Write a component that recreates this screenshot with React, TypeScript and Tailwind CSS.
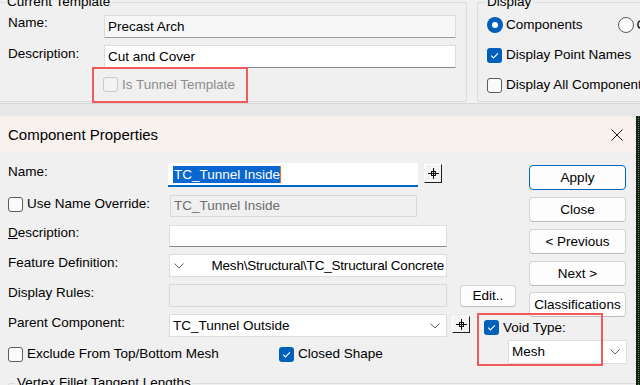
import React from "react";

function Box({ checked = false, disabled = false, cls = "" }: { checked?: boolean; disabled?: boolean; cls?: string }) {
  if (checked) {
    return (
      <div className={"w-[15px] h-[15px] shrink-0 rounded-[3px] bg-[#005fb8] flex items-center justify-center " + cls}>
        <svg width="11" height="11" viewBox="0 0 11 11">
          <polyline points="2.2,5.7 4.4,7.9 8.9,3.3" fill="none" stroke="#ffffff" strokeWidth="1.1" />
        </svg>
      </div>
    );
  }
  return (
    <div
      className={
        (disabled
          ? "w-[15px] h-[15px] shrink-0 rounded-[3px] border border-[#c9c9c9] bg-[#f3f3f3] "
          : "w-[15px] h-[15px] shrink-0 rounded-[3px] border border-[#5c5c5c] bg-[#fbfbfb] ") + cls
      }
    />
  );
}

function Radio({ on = false }: { on?: boolean }) {
  if (on) {
    return (
      <div className="w-[16px] h-[16px] shrink-0 rounded-full bg-[#005fb8] flex items-center justify-center">
        <div className="w-[6px] h-[6px] rounded-full bg-white" />
      </div>
    );
  }
  return <div className="w-[16px] h-[16px] shrink-0 rounded-full border border-[#5c5c5c] bg-[#fbfbfb]" />;
}

function Chevron() {
  return (
    <svg width="10" height="6" viewBox="0 0 10 6" className="shrink-0">
      <polyline points="0.5,0.5 5,5 9.5,0.5" fill="none" stroke="#5f5f5f" strokeWidth="1" />
    </svg>
  );
}

function Pin({ cls }: { cls: string }) {
  return (
    <div
      className={
        "w-[18px] shrink-0 bg-[#f4f4f4] border border-t-[#ffffff] border-l-[#ffffff] border-r-[#1e1e1e] border-b-[#1e1e1e] flex items-center justify-center " +
        cls
      }
    >
      <svg width="11" height="11" viewBox="0 0 11 11">
        <line x1="0" y1="5.5" x2="11" y2="5.5" stroke="#111" strokeWidth="1" />
        <line x1="5.5" y1="0" x2="5.5" y2="11" stroke="#111" strokeWidth="1" />
        <rect x="3.5" y="3.5" width="4" height="4" fill="none" stroke="#111" strokeWidth="1" />
      </svg>
    </div>
  );
}

function Btn({ children, primary = false, cls = "" }: { children: React.ReactNode; primary?: boolean; cls?: string }) {
  return (
    <div
      className={
        (primary
          ? "w-[97px] h-[25px] shrink-0 rounded-[4px] bg-[#fdfdfd] border border-[#0067c0] flex items-center justify-center whitespace-nowrap "
          : "w-[97px] h-[25px] shrink-0 rounded-[4px] bg-[#fdfdfd] border border-[#d3d3d3] border-b-[#bcbcbc] flex items-center justify-center whitespace-nowrap ") +
        cls
      }
    >
      {children}
    </div>
  );
}

export default function App() {
  return (
    <div className="relative w-[640px] h-[385px] overflow-hidden bg-[#f0f0f0] text-[13.5px] leading-[18px] text-black font-['Liberation_Sans',Arial,sans-serif]">
      {/* background window */}
      <div className="h-[104px] border-b border-[#d6d6d6] flex overflow-hidden">
        <fieldset className="ml-[-2px] mt-[-7px] w-[469px] h-[109px] shrink-0 border border-[#dcdcdc] rounded-[2px]">
          <legend className="ml-[6px] px-[2px] whitespace-nowrap">Current Template</legend>
          <div className="pl-[9px]">
            <div className="mt-[4px] flex items-start h-[23px]">
              <div className="w-[96px] shrink-0 mt-[-1px]">Name:</div>
              <div className="w-[352px] h-[23px] shrink-0 bg-[#f6f6f6] border border-[#dcdcdc] border-b-[#9b9b9b] flex items-center pl-[3px]">
                Precast Arch
              </div>
            </div>
            <div className="mt-[7px] flex items-start h-[23px]">
              <div className="w-[96px] shrink-0">Description:</div>
              <div className="w-[352px] h-[23px] shrink-0 bg-white border border-[#dcdcdc] border-b-[#8a8a8a] flex items-center pl-[3px]">
                Cut and Cover
              </div>
            </div>
            <div className="mt-[9px] flex items-center h-[15px]">
              <Box disabled cls="ml-[95px]" />
              <span className="ml-[4px] text-[#8d8d8d] whitespace-nowrap">Is Tunnel Template</span>
            </div>
          </div>
        </fieldset>
        <fieldset className="ml-[10px] mt-[-7px] w-[200px] h-[109px] shrink-0 border border-[#dcdcdc] rounded-[2px]">
          <legend className="ml-[7px] px-[2px] whitespace-nowrap">Display</legend>
          <div className="pl-[9px] whitespace-nowrap">
            <div className="mt-[6px] h-[16px] flex items-center">
              <Radio on />
              <span className="ml-[3px]">Components</span>
              <div className="ml-[35px]">
                <Radio />
              </div>
              <span className="ml-[3px]">Constraints</span>
            </div>
            <div className="mt-[14px] h-[16px] flex items-center">
              <Box checked />
              <span className="ml-[4px]">Display Point Names</span>
            </div>
            <div className="mt-[14px] h-[16px] flex items-center">
              <Box />
              <span className="ml-[4px]">Display All Components</span>
            </div>
          </div>
        </fieldset>
      </div>
      <div className="h-[12px] bg-[#e8e8e8]" />

      {/* dialog area */}
      <div className="flex h-[269px] bg-[#e8e8e8]">
        <div className="w-[636px] shrink-0 h-full flex flex-col rounded-tr-[8px] rounded-tl-[3px] overflow-hidden bg-[#f0f0f0]">
          <div className="h-[37px] shrink-0 bg-[#f9f1ee] flex items-center justify-between pl-[8px] pr-[13px]">
            <span className="text-[15px]">Component Properties</span>
            <svg width="12" height="12" viewBox="0 0 12 12">
              <line x1="0.5" y1="0.5" x2="11.5" y2="11.5" stroke="#1a1a1a" strokeWidth="1" />
              <line x1="11.5" y1="0.5" x2="0.5" y2="11.5" stroke="#1a1a1a" strokeWidth="1" />
            </svg>
          </div>

          <div className="flex-1 pt-[10px] pl-[8px] pr-[10px]">
            <div className="flex">
              <div className="w-[521px] shrink-0">
                {/* Name */}
                <div className="flex items-start h-[24px]">
                  <div className="w-[160px] shrink-0">Name:</div>
                  <div className="w-[250px] h-[24px] shrink-0 bg-white border-b-2 border-[#0067c0] flex items-center pl-[5px]">
                    <span className="bg-[#0b67d0] text-white leading-[17px] pl-[1px] whitespace-nowrap">TC_Tunnel Inside</span>
                    <span className="w-px h-[17px] bg-[#e8731c]" />
                  </div>
                  <Pin cls="ml-[6px] mt-[1px] h-[19px]" />
                </div>
                {/* Use name override */}
                <div className="mt-[8px] flex items-start h-[22px]">
                  <div className="w-[162px] shrink-0 flex items-start">
                    <Box cls="mt-[2px]" />
                    <span className="ml-[4px] whitespace-nowrap">Use Name Override:</span>
                  </div>
                  <div className="w-[247px] h-[22px] shrink-0 bg-[#f0f0f0] border border-[#d9d9d9] flex items-center pl-[3px] text-[#6d6d6d]">
                    TC_Tunnel Inside
                  </div>
                </div>
                {/* Description */}
                <div className="mt-[8px] flex items-start h-[22px]">
                  <div className="w-[161px] shrink-0 mt-[-1px]">
                    <span className="underline">D</span>escription:
                  </div>
                  <div className="w-[278px] h-[22px] shrink-0 bg-white border border-[#dedede] border-b-[#888888]" />
                </div>
                {/* Feature definition */}
                <div className="mt-[7px] flex items-start h-[23px]">
                  <div className="w-[161px] shrink-0">Feature Definition:</div>
                  <div className="w-[278px] h-[23px] shrink-0 bg-white border border-[#dedede] flex items-center pl-[4px] pr-[2px] overflow-hidden">
                    <Chevron />
                    <div className="flex-1 flex justify-end overflow-hidden">
                      <span className="whitespace-nowrap shrink-0 tracking-[-0.2px]">{"Mesh\\Structural\\TC_Structural Concrete"}</span>
                    </div>
                  </div>
                </div>
                {/* Display rules */}
                <div className="mt-[7px] flex items-start h-[23px]">
                  <div className="w-[161px] shrink-0">Display Rules:</div>
                  <div className="w-[278px] h-[23px] shrink-0 bg-[#f0f0f0] border border-[#d9d9d9]" />
                  <div className="ml-[13px] mt-[1px] w-[56px] h-[22px] shrink-0 rounded-[4px] bg-[#fdfdfd] border border-[#d3d3d3] border-b-[#bcbcbc] flex items-center justify-center">
                    Edit..
                  </div>
                </div>
                {/* Parent component */}
                <div className="mt-[7px] flex items-start h-[23px]">
                  <div className="w-[161px] shrink-0">Parent Component:</div>
                  <div className="w-[278px] h-[23px] shrink-0 bg-white border border-[#dedede] flex items-center justify-between pl-[3px] pr-[6px]">
                    <span className="whitespace-nowrap">TC_Tunnel Outside</span>
                    <Chevron />
                  </div>
                  <Pin cls="ml-[5px] mt-[2px] h-[17px]" />
                  <Box checked cls="ml-[14px] mt-[6px]" />
                  <span className="ml-[4px] mt-[5px] shrink-0 whitespace-nowrap">Void Type:</span>
                </div>
              </div>

              <div className="w-[97px] shrink-0 flex flex-col">
                <Btn primary cls="mt-[2px]">Apply</Btn>
                <Btn cls="mt-[7px]">Close</Btn>
                <Btn cls="mt-[7px]">{"< Previous"}</Btn>
                <Btn cls="mt-[7px]">{"Next >"}</Btn>
                <Btn cls="mt-[6px]">Classifications</Btn>
              </div>
            </div>

            {/* checkboxes + mesh */}
            <div className="mt-[3px] flex items-start h-[24px]">
              <div className="w-[271px] shrink-0 flex items-start">
                <Box cls="mt-[7px]" />
                <span className="ml-[4px] mt-[5px] whitespace-nowrap">Exclude From Top/Bottom Mesh</span>
              </div>
              <Box checked cls="mt-[7px]" />
              <span className="ml-[4px] mt-[5px] whitespace-nowrap">Closed Shape</span>
              <div className="ml-auto mr-[-1px] w-[119px] h-[24px] shrink-0 bg-white border border-[#dedede] flex items-center justify-between pl-[3px] pr-[6px]">
                <span>Mesh</span>
                <Chevron />
              </div>
            </div>

            <fieldset className="mt-[10px] mr-[-30px] h-[40px] border border-[#dcdcdc] rounded-[2px]">
              <legend className="ml-[6px] px-[2px] whitespace-nowrap">Vertex Fillet Tangent Lengths</legend>
            </fieldset>
          </div>
        </div>
        <div className="flex-1 bg-[#1c1c1c] flex">
          <div className="ml-[2px] h-full border-l border-dotted border-[#3f9f3f]" />
        </div>
      </div>

      {/* annotation rectangles */}
      <div className="absolute left-[92px] top-[67px] w-[156px] h-[36px] border-2 border-[#ef5b5b]" />
      <div className="absolute left-[477px] top-[313px] w-[126px] h-[53px] border-2 border-[#ef5b5b]" />
    </div>
  );
}
